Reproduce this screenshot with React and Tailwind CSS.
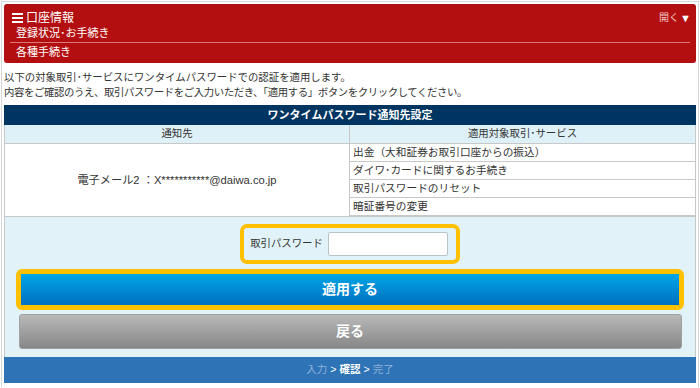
import React from "react";

const font = { fontFamily: '"Liberation Sans", "Noto Sans CJK JP", sans-serif' };

const services = [
  "出金（大和証券お取引口座からの振込）",
  "ダイワ･カードに関するお手続き",
  "取引パスワードのリセット",
  "暗証番号の変更",
];

const App = () => {
  return (
    <div
      className="m-px h-[386px] border border-b-0 border-[#d6d6d6] bg-white px-[2px] pt-[2px] text-[#333]"
      style={font}
    >
      {/* Menu header */}
      <div className="h-[59px] rounded-[3px] bg-[#b30f10] text-white">
        <div className="flex h-[22px] items-end justify-between pl-[8px] pr-[5px] pb-[1px]">
          <div className="flex items-center gap-[3px] text-[12px] leading-[14px]">
            <span className="flex w-[11px] flex-col gap-[2px]">
              <span className="h-[2px] bg-white" />
              <span className="h-[2px] bg-white" />
              <span className="h-[2px] bg-white" />
            </span>
            口座情報
          </div>
          <div className="flex items-center gap-[1px] text-[10px] leading-[14px]">
            <span className="text-[#f3c5c5]">開く</span>
            <span className="text-[11px]">▼</span>
          </div>
        </div>
        <div className="h-[16px] pl-[12px] text-[11px] leading-[14px]">登録状況･お手続き</div>
        <div className="mx-[6px] h-px bg-[#d9797a]" />
        <div className="h-[19px] pl-[12px] pt-[2px] text-[11px] leading-[14px]">各種手続き</div>
      </div>

      {/* Description */}
      <div className="pt-[7px] text-[10.4px] leading-[15px] text-[#333]">
        <p>以下の対象取引･サービスにワンタイムパスワードでの認証を適用します。</p>
        <p className="tracking-[-0.4px]">内容をご確認のうえ、取引パスワードをご入力いただき、「適用する」ボタンをクリックしてください。</p>
      </div>

      {/* Table */}
      <div className="mt-[5px]">
        <div className="flex h-[20px] items-center justify-center bg-[#003561] text-[11px] font-bold text-white">
          ワンタイムパスワード通知先設定
        </div>
        <div className="grid grid-cols-2 border-x border-[#c8c8c8] bg-[#dff1f8] text-[10.4px] leading-[18px]">
          <div className="border-b border-r border-[#c8c8c8] text-center">通知先</div>
          <div className="border-b border-[#c8c8c8] text-center">適用対象取引･サービス</div>
        </div>
        <div className="grid grid-cols-2 border-x border-[#c8c8c8] bg-white text-[10.7px]">
          <div className="flex items-center justify-center border-r border-[#c8c8c8] text-[11.2px]">
            電子メール2 ：X***********@daiwa.co.jp
          </div>
          <div className="flex flex-col">
            {services.map((s) => (
              <div key={s} className="h-[18px] border-b border-[#c8c8c8] pl-[3px] leading-[17px]">
                {s}
              </div>
            ))}
          </div>
        </div>

        {/* Actions */}
        <div className="flex h-[141px] flex-col items-center gap-[5px] border-x border-t border-[#c8c8c8] bg-[#e1f3f8] px-[11px] pt-[7px]">
          <div className="flex h-[40px] items-center gap-[5px] rounded-[7px] border-[4px] border-[#ffc000] pl-[6px] pr-[8px]">
            <span className="text-[10.4px]">取引パスワード</span>
            <input
              type="password"
              className="h-[24px] w-[120px] rounded-[2px] border border-[#b9c3c7] bg-white outline-none"
            />
          </div>
          <div className="flex h-[41px] w-full items-center rounded-[6px] border-[5px] border-[#ffc000] bg-[#ffc000]">
            <button className="flex h-full w-full items-center justify-center bg-gradient-to-b from-[#00a6e6] to-[#0070c0] text-[14px] font-bold text-white">
              適用する
            </button>
          </div>
          <button className="-mt-px flex h-[35px] w-[663px] items-center justify-center rounded-[3px] border border-[#a0a0a0] bg-gradient-to-b from-[#b9b9b9] to-[#878787] text-[14px] font-bold text-white">
            戻る
          </button>
        </div>

        {/* Steps */}
        <div className="flex h-[26px] items-center justify-center gap-[3px] bg-[#2e73b6] text-[10.5px] text-white">
          <span className="text-[#8fb1d8]">入力</span>
          <span>&gt;</span>
          <span className="font-bold">確認</span>
          <span>&gt;</span>
          <span className="text-[#8fb1d8]">完了</span>
        </div>
      </div>
    </div>
  );
};

export default App;
